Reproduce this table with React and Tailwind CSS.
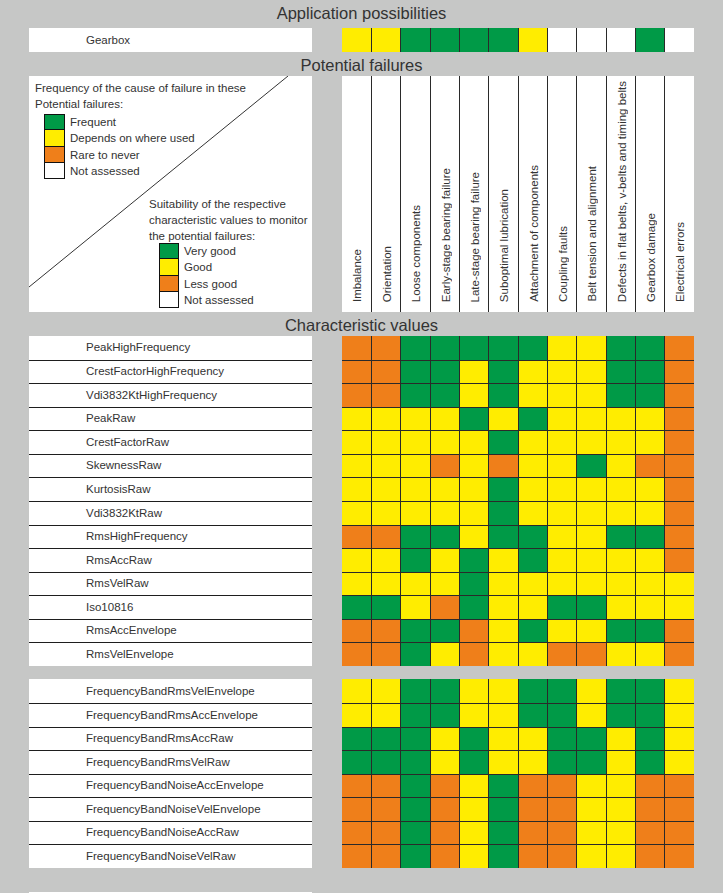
import React from "react";

const COLOR = {
  G: "bg-[#009a47]",
  Y: "bg-[#ffed00]",
  O: "bg-[#ef7f1a]",
  W: "bg-white",
};

const columns = [
  "Imbalance",
  "Orientation",
  "Loose components",
  "Early-stage bearing failure",
  "Late-stage bearing failure",
  "Suboptimal lubrication",
  "Attachment of components",
  "Coupling faults",
  "Belt tension and alignment",
  "Defects in flat belts, v-belts and timing belts",
  "Gearbox damage",
  "Electrical errors",
];

const block1 = [
  ["PeakHighFrequency", "OOGGGGGYYGGO"],
  ["CrestFactorHighFrequency", "OOGGYGYYYGGO"],
  ["Vdi3832KtHighFrequency", "OOGGYGYYYGGO"],
  ["PeakRaw", "YYYYGYGYYYYO"],
  ["CrestFactorRaw", "YYYYYGYYYYYO"],
  ["SkewnessRaw", "YYYOYOYYGYOO"],
  ["KurtosisRaw", "YYYYYGYYYYYO"],
  ["Vdi3832KtRaw", "YYYYYGYYYYYO"],
  ["RmsHighFrequency", "OOGGYGGYYGGO"],
  ["RmsAccRaw", "YYGYGYGYYYYO"],
  ["RmsVelRaw", "YYYYGYYYYYYY"],
  ["Iso10816", "GGYOGYYGGYYY"],
  ["RmsAccEnvelope", "OOGGOYGYYGGO"],
  ["RmsVelEnvelope", "OOGYOYYOOYYO"],
];

const block2 = [
  ["FrequencyBandRmsVelEnvelope", "YYGGYYGGYGGY"],
  ["FrequencyBandRmsAccEnvelope", "YYGGYYGGYGGY"],
  ["FrequencyBandRmsAccRaw", "GGGYGYYGGYGY"],
  ["FrequencyBandRmsVelRaw", "GGGYGYYGGYGY"],
  ["FrequencyBandNoiseAccEnvelope", "OOGOYGOOYYOO"],
  ["FrequencyBandNoiseVelEnvelope", "OOGOYGOOYYOO"],
  ["FrequencyBandNoiseAccRaw", "OOGOYGOOYYOO"],
  ["FrequencyBandNoiseVelRaw", "OOGOYGOOYYOO"],
];

function Title({ children }) {
  return (
    <div className="h-[24px] text-center text-[16.5px] leading-[26px] text-[#333]">
      {children}
    </div>
  );
}

function Cells({ pattern, top }) {
  return (
    <div className="flex h-full w-[352px]">
      {pattern.split("").map((c, i) => (
        <div
          key={i}
          className={`h-full w-[29.333px] border-[#2a2a2a] ${COLOR[c]} ${
            i > 0 ? "border-l" : ""
          } ${top ? "border-t" : ""}`}
        />
      ))}
    </div>
  );
}

function Block({ rows }) {
  return (
    <div className="flex pl-[29px]">
      <div className="w-[283px] bg-white">
        {rows.map(([label], r) => (
          <div
            key={label}
            className={`flex h-[23.57px] items-center pl-[57px] text-[11.5px] text-[#333] ${
              r > 0 ? "border-t border-[#1e1e1e]" : ""
            }`}
          >
            {label}
          </div>
        ))}
      </div>
      <div className="ml-[29.67px] w-[352px]">
        {rows.map(([label, pattern], r) => (
          <div key={label} className="h-[23.57px]">
            <Cells pattern={pattern} top={r > 0} />
          </div>
        ))}
      </div>
    </div>
  );
}

function Swatches({ items, width }) {
  return (
    <div className="flex flex-col">
      {items.map(([c, label], i) => (
        <div key={label} className="flex h-[16.25px] items-center">
          <div
            className={`h-[16.25px] ${width} border-x border-b border-[#111] ${
              i === 0 ? "border-t" : ""
            } ${COLOR[c]}`}
          />
          <span className="ml-[5px] text-[11.5px] leading-[16px] text-[#333]">
            {label}
          </span>
        </div>
      ))}
    </div>
  );
}

export default function App() {
  return (
    <div className="flex h-[893px] w-[723px] flex-col overflow-hidden bg-[#c6c7c6] font-['Liberation_Sans',Arial,sans-serif]">
      <div className="h-[28px] text-center text-[16.5px] leading-[26px] text-[#333]">
        Application possibilities
      </div>

      {/* Gearbox row */}
      <div className="flex h-[24px] pl-[29px]">
        <div className="flex h-[23.6px] w-[283px] items-center bg-white pl-[57px] pt-[2px] text-[11.5px] text-[#333]">
          Gearbox
        </div>
        <div className="ml-[29.67px] h-[23.6px] w-[352px]">
          <Cells pattern="YYGGGGYWWWGW" top={false} />
        </div>
      </div>

      <Title>Potential failures</Title>

      {/* Header */}
      <div className="flex h-[236px] pl-[29px]">
        <div className="relative flex w-[283px] flex-col justify-between bg-white pb-[4px] pl-[6px] pt-[4px] text-[11.5px] leading-[16px] text-[#333]">
          <svg
            className="pointer-events-none absolute left-0 top-0"
            width="283"
            height="236"
          >
            <line x1="0" y1="211" x2="259" y2="0" stroke="#333" strokeWidth="1" />
          </svg>
          <div className="relative">
            <div>Frequency of the cause of failure in these</div>
            <div>Potential failures:</div>
            <div className="ml-[9px] mt-[2px]">
              <Swatches
                width="w-[21px]"
                items={[
                  ["G", "Frequent"],
                  ["Y", "Depends on where used"],
                  ["O", "Rare to never"],
                  ["W", "Not assessed"],
                ]}
              />
            </div>
          </div>
          <div className="relative ml-[114px]">
            <div>Suitability of the respective</div>
            <div>characteristic values to monitor</div>
            <div>the potential failures:</div>
            <div className="-mt-[1px] ml-[10px]">
              <Swatches
                width="w-[20px]"
                items={[
                  ["G", "Very good"],
                  ["Y", "Good"],
                  ["O", "Less good"],
                  ["W", "Not assessed"],
                ]}
              />
            </div>
          </div>
        </div>
        <div className="ml-[29.67px] flex w-[352px] bg-white">
          {columns.map((c, i) => (
            <div
              key={c}
              className={`flex h-full w-[29.333px] flex-col items-center justify-end border-[#2a2a2a] pb-[10px] pl-[2px] ${
                i > 0 ? "border-l" : ""
              }`}
            >
              <span className="rotate-180 whitespace-nowrap text-[11.5px] leading-[16px] text-[#333] [writing-mode:vertical-rl]">
                {c}
              </span>
            </div>
          ))}
        </div>
      </div>

      <Title>Characteristic values</Title>

      <Block rows={block1} />
      <div className="h-[13.5px]" />
      <Block rows={block2} />

      <div className="flex-1" />
      <div className="flex h-[1px] pl-[29px]">
        <div className="w-[283px] bg-white" />
      </div>
    </div>
  );
}
